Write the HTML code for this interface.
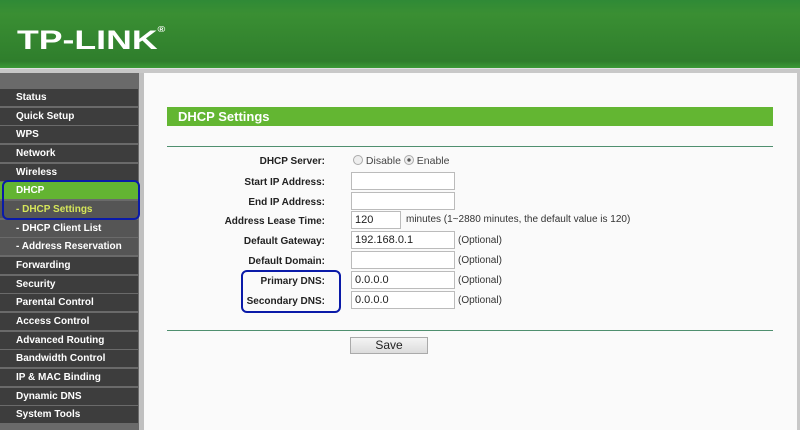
<!DOCTYPE html>
<html><head><style>
*{margin:0;padding:0;box-sizing:border-box}
body{width:800px;height:430px;overflow:hidden;background:#fafafa;font-family:"Liberation Sans",Arial,sans-serif;position:relative}
#hdr{position:absolute;left:0;top:0;width:800px;height:68px;background:linear-gradient(#2f8a36,#3a8f33 20%,#2f7e2c 90%,#3b9a35)}
#logo{position:absolute;left:17px;top:25px;color:#fff;font-weight:bold;font-size:27px;letter-spacing:0px;transform:scaleX(1.32);transform-origin:left}
#strip{position:absolute;left:0;top:68px;width:800px;height:5px;background:#c8c8c8;border-top:1px solid #e0e0e0}
#side{position:absolute;left:0;top:73px;width:139px;height:357px;background:#6a6a6a}
#side div{position:absolute;left:0;width:138px;height:17px;background:#3d3d3d;color:#fff;font-weight:bold;font-size:10px;line-height:18px;padding-left:16px}
#side .sub{background:#555}
#side .g{background:#63b432}
#side .y{color:#d6e65a;background:#555}
#sep{position:absolute;left:139px;top:73px;width:5px;height:357px;background:#c0c0c0}
#rb{position:absolute;left:797px;top:73px;width:3px;height:357px;background:#c8c8c8}
.abs{position:absolute}
.lbl{position:absolute;right:475px;font-size:10px;font-weight:bold;color:#222;text-align:right;white-space:nowrap}
.in{position:absolute;left:351px;width:104px;height:18px;border:1px solid #bbb;background:#fff;font-size:11px;line-height:16px;padding-left:3px;color:#222}
.opt{position:absolute;left:458px;font-size:10px;color:#333}
.box{position:absolute;border:2.5px solid #0a1aa8;border-radius:6px}
</style></head><body>
<div id="hdr"><div id="logo">TP-LINK<span style="font-size:8px;vertical-align:top">®</span></div></div>
<div id="strip"></div>
<div id="side">
<div style="top:16px">Status</div>
<div style="top:35px">Quick Setup</div>
<div style="top:53px">WPS</div>
<div style="top:72px">Network</div>
<div style="top:91px">Wireless</div>
<div class="g" style="top:109px">DHCP</div>
<div class="y" style="top:128px">- DHCP Settings</div>
<div class="sub" style="top:147px">- DHCP Client List</div>
<div class="sub" style="top:165px">- Address Reservation</div>
<div style="top:184px">Forwarding</div>
<div style="top:203px">Security</div>
<div style="top:221px">Parental Control</div>
<div style="top:240px">Access Control</div>
<div style="top:259px">Advanced Routing</div>
<div style="top:277px">Bandwidth Control</div>
<div style="top:296px">IP &amp; MAC Binding</div>
<div style="top:315px">Dynamic DNS</div>
<div style="top:333px">System Tools</div>
</div>
<div id="sep"></div><div id="rb"></div>
<div class="abs" style="left:167px;top:107px;width:606px;height:19px;background:#63b632;color:#fff;font-weight:bold;font-size:13px;line-height:19px;padding-left:11px">DHCP Settings</div>
<div class="abs" style="left:167px;top:146px;width:606px;height:1px;background:#4f8f6f"></div>
<div class="lbl" style="top:156px">DHCP Server:</div>
<div class="abs" style="left:353px;top:155px;font-size:10.5px;color:#444"><span style="display:inline-block;width:10px;height:10px;border:1px solid #aaa;border-radius:50%;background:#eee;vertical-align:-1px"></span> Disable <span style="display:inline-block;width:10px;height:10px;border:1px solid #aaa;border-radius:50%;background:radial-gradient(#555 25%,#eee 35%);vertical-align:-1px"></span> Enable</div>
<div class="lbl" style="top:177px">Start IP Address:</div><div class="in" style="top:172px"></div>
<div class="lbl" style="top:197px">End IP Address:</div><div class="in" style="top:192px"></div>
<div class="lbl" style="top:216px">Address Lease Time:</div><div class="in" style="top:211px;width:50px">120</div>
<div class="opt" style="top:214px;left:406px">minutes (1~2880 minutes, the default value is 120)</div>
<div class="lbl" style="top:236px">Default Gateway:</div><div class="in" style="top:231px">192.168.0.1</div><div class="opt" style="top:235px">(Optional)</div>
<div class="lbl" style="top:256px">Default Domain:</div><div class="in" style="top:251px"></div><div class="opt" style="top:255px">(Optional)</div>
<div class="lbl" style="top:276px">Primary DNS:</div><div class="in" style="top:271px">0.0.0.0</div><div class="opt" style="top:275px">(Optional)</div>
<div class="lbl" style="top:296px">Secondary DNS:</div><div class="in" style="top:291px">0.0.0.0</div><div class="opt" style="top:295px">(Optional)</div>
<div class="abs" style="left:167px;top:330px;width:606px;height:1px;background:#4f8f6f"></div>
<div class="abs" style="left:350px;top:337px;width:78px;height:17px;border:1px solid #aaa;background:linear-gradient(#f4f4f4,#dcdcdc);font-size:12px;text-align:center;line-height:15px;color:#222">Save</div>
<div class="box" style="left:2px;top:180px;width:138px;height:40px"></div>
<div class="box" style="left:241px;top:270px;width:100px;height:43px"></div>
</body></html>
